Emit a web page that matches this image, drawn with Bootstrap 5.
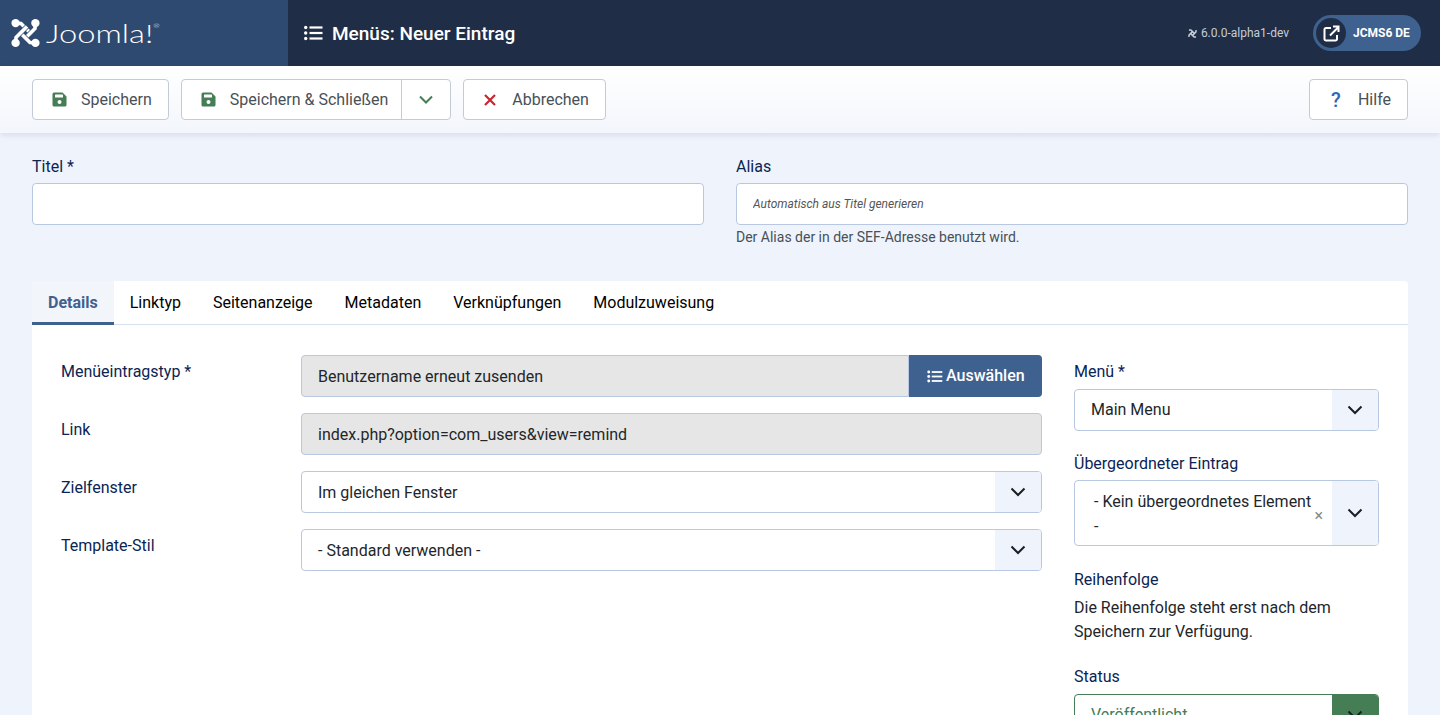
<!DOCTYPE html>
<html lang="de">
<head>
  <meta charset="UTF-8">
  <title>Menüs: Neuer Eintrag</title>
  <meta name="viewport" content="width=device-width, initial-scale=1">
  <link href="https://cdn.jsdelivr.net/npm/bootstrap@5.3.3/dist/css/bootstrap.min.css" rel="stylesheet">
  <style>
    html, body { height: 715px; overflow: hidden; }
    body { background: #eff4fc; font-family: Roboto, "Liberation Sans", sans-serif; font-size: 16px; color: #22262a; }

    .top-head { height: 66px; background: #1f2e46; color: #fff; }
    .brand-box { width: 288px; background: #2f4a70; padding-left: 11px; }
    .brand-word { display: inline-block; font-family: Lato, sans-serif; font-weight: 300; font-size: 26px; line-height: 1; margin-left: 6px; transform: scaleX(1.26); transform-origin: left center; }
    .brand-word sup { font-size: 6px; top: -15px; vertical-align: baseline; position: relative; }
    .page-title { font-size: 19px; font-weight: 500; margin: 0 0 0 9px; line-height: 1; }
    .version-txt { font-size: 12px; color: #c4ccd8; margin-right: 24px; gap: 3px; }
    .site-pill { width: 108px; height: 36px; background: #3e618f; border-radius: 18px; margin-right: 19px; padding: 0 3px; font-size: 12px; font-weight: 700; }
    .site-pill-ico { width: 30px; height: 30px; border-radius: 50%; background: #1f2e46; margin-right: 7px; }

    .tool-bar { height: 67px; background: linear-gradient(#fff, #f3f6fc); box-shadow: 0 2px 6px rgba(30, 50, 90, .12); padding: 13px 32px; gap: 12px; position: relative; }
    .tool-btn { height: 41px; background: #fff; border: 1px solid #c3cbd6; border-radius: 4px; color: #495057; padding: 0 16px 0 19px; gap: 14px; font-size: 16px; line-height: 1; }
    .tool-btn.split { padding: 0; gap: 0; }
    .tool-btn.cancel-btn { padding: 0 16px 0 20px; gap: 16px; }
    .tool-btn.help-btn { padding-left: 21px; gap: 0; }
    .help-mark { color: #2a69b8; font-size: 20px; font-weight: 500; width: 27px; }
    .split-main { padding: 0 13px 0 19px; gap: 14px; height: 100%; }
    .split-caret { width: 49px; height: 100%; border-left: 1px solid #c3cbd6; }

    .page-body { padding: 24px 32px 0; }
    .fld-label { color: #0b2454; line-height: 20px; margin-bottom: 6px; display: block; }
    .fld-input { height: 42px; border: 1px solid #b8c8e2; border-radius: 4px; background: #fff; color: #22262a; padding: 0 16px; }
    .fld-input.alias-input { padding-bottom: 3px; }
    .fld-input::placeholder { font-size: 12px; font-style: italic; color: #555; }
    .fld-input:disabled, .fld-input[readonly] { background: #e6e6e6; opacity: 1; }
    .fld-hint { font-size: 14px; color: #495057; margin-top: 2px; line-height: 21px; }
    .title-row { display: grid; grid-template-columns: 672px 672px; gap: 32px; height: 124px; }

    .tab-card { background: #fff; border-radius: 4px 4px 0 0; }
    .tab-strip { height: 44px; border-bottom: 1px solid #d8e1ef; }
    .tab-link { height: 44px; padding: 0 16px; line-height: 43px; color: #000; font-size: 16px; }
    .tab-link.on { background: #f2f6fb; color: #3f618f; font-weight: 700; border-bottom: 3px solid #3f618f; }

    .form-wrap { display: grid; grid-template-columns: 981px 305px; gap: 32px; padding: 30px 29px 0; }
    .form-row { display: grid; grid-template-columns: 240px 741px; min-height: 42px; margin-bottom: 16px; }
    .form-row > label { color: #0b2454; padding-top: 8px; line-height: 18px; }
    .pick-btn { width: 133px; height: 42px; background: #3e618f; color: #fff; font-weight: 500; border-radius: 0 4px 4px 0; gap: 3px; padding-left: 18px; flex: none; }
    .sel-box { height: 42px; border: 1px solid #b8c8e2; border-radius: 4px; background: #fff; overflow: hidden; color: #22262a; }
    .sel-txt { flex: 1; padding: 0 16px; }
    .form-row .sel-txt { padding-top: 2px; }
    .sel-caret { width: 46px; align-self: stretch; background: #eff4fc; flex: none; }
    .sel-box.tall { height: 66px; position: relative; }
    .sel-box.tall .sel-txt { padding: 8px 16px 0 19px; line-height: 25px; align-self: flex-start; }
    .clear-x { position: absolute; right: 55px; top: 25px; font-size: 16px; color: #888; line-height: 20px; }
    .sel-box.good { border-color: #457d54; color: #457d54; }
    .sel-box.good .sel-caret { background: #457d54; }
    .side-col { padding-top: 7px; }
    .side-group { margin-bottom: 23px; }
    .side-group p { margin: 0; line-height: 24px; }
  </style>
</head>
<body>

<svg width="0" height="0" class="position-absolute">
  <defs>
    <path id="jarm" d="M4.8 5.3 L10 5.5 L21 16.5"/>
    <g id="jarm-full">
      <use href="#jarm" fill="none" stroke="#2f4a70" stroke-width="5"/>
      <use href="#jarm" fill="none" stroke="#fff" stroke-width="3.6"/>
      <circle cx="4.6" cy="5.1" r="4.2" fill="#fff"/>
    </g>
  </defs>
</svg>

<header class="top-head d-flex align-items-stretch">
  <div class="brand-box d-flex align-items-center">
    <svg width="29" height="30" viewBox="0 0 29 30">
      <use href="#jarm-full"/>
      <use href="#jarm-full" transform="rotate(90 14.5 15)"/>
      <use href="#jarm-full" transform="rotate(180 14.5 15)"/>
      <use href="#jarm-full" transform="rotate(270 14.5 15)"/>
    </svg>
    <span class="brand-word">Joomla!<sup>®</sup></span>
  </div>
  <div class="d-flex align-items-center flex-grow-1">
    <svg class="ms-3" width="19" height="16" viewBox="0 0 19 16" fill="#fff">
      <circle cx="1.7" cy="2.5" r="1.7"/><circle cx="1.7" cy="8" r="1.7"/><circle cx="1.7" cy="13.5" r="1.7"/>
      <rect x="5.5" y="1.4" width="13" height="2.2"/><rect x="5.5" y="6.9" width="13" height="2.2"/><rect x="5.5" y="12.4" width="13" height="2.2"/>
    </svg>
    <h1 class="page-title">Menüs: Neuer Eintrag</h1>
  </div>
  <div class="d-flex align-items-center">
    <span class="version-txt d-flex align-items-center">
      <svg width="11" height="11" viewBox="0 0 29 30" fill="none" stroke="#c4ccd8" stroke-width="4">
        <path d="M4.8 5.3 L10 5.5 L21 16.5"/>
        <path d="M4.8 5.3 L10 5.5 L21 16.5" transform="rotate(90 14.5 15)"/>
        <path d="M4.8 5.3 L10 5.5 L21 16.5" transform="rotate(180 14.5 15)"/>
        <path d="M4.8 5.3 L10 5.5 L21 16.5" transform="rotate(270 14.5 15)"/>
      </svg>
      6.0.0-alpha1-dev
    </span>
    <div class="site-pill d-flex align-items-center">
      <span class="site-pill-ico d-flex align-items-center justify-content-center">
        <svg width="17" height="17" viewBox="0 0 17 17" fill="none" stroke="#fff" stroke-width="2">
          <path d="M8 3 H3 a1.5 1.5 0 0 0 -1.5 1.5 V14 a1.5 1.5 0 0 0 1.5 1.5 H12.5 a1.5 1.5 0 0 0 1.5 -1.5 V10"/>
          <path d="M7 10.5 L15 2.5 M10 1.5 H15.5 V7"/>
        </svg>
      </span>
      JCMS6 DE
    </div>
  </div>
</header>

<div class="tool-bar d-flex">
  <div class="tool-btn d-flex align-items-center">
    <svg width="15" height="15" viewBox="0 0 15 15"><path fill="#457d54" d="M2 .5 H10.5 L14.5 4.5 V13 a1.5 1.5 0 0 1 -1.5 1.5 H2 A1.5 1.5 0 0 1 .5 13 V2 A1.5 1.5 0 0 1 2 .5 Z"/><rect x="3" y="2.5" width="8" height="3" rx=".5" fill="#fff"/><circle cx="7.5" cy="10" r="2" fill="#fff"/></svg>
    Speichern
  </div>
  <div class="tool-btn split d-flex align-items-center">
    <div class="split-main d-flex align-items-center">
      <svg width="15" height="15" viewBox="0 0 15 15"><path fill="#457d54" d="M2 .5 H10.5 L14.5 4.5 V13 a1.5 1.5 0 0 1 -1.5 1.5 H2 A1.5 1.5 0 0 1 .5 13 V2 A1.5 1.5 0 0 1 2 .5 Z"/><rect x="3" y="2.5" width="8" height="3" rx=".5" fill="#fff"/><circle cx="7.5" cy="10" r="2" fill="#fff"/></svg>
      Speichern &amp; Schließen
    </div>
    <div class="split-caret d-flex align-items-center justify-content-center">
      <svg width="14" height="9" viewBox="0 0 14 9" fill="none" stroke="#457d54" stroke-width="2"><path d="M1 1.5 L7 7.5 L13 1.5"/></svg>
    </div>
  </div>
  <div class="tool-btn cancel-btn d-flex align-items-center">
    <svg width="12" height="12" viewBox="0 0 12 12" fill="none" stroke="#c8272d" stroke-width="2.2"><path d="M1 1 L11 11 M11 1 L1 11"/></svg>
    Abbrechen
  </div>
  <div class="tool-btn help-btn d-flex align-items-center ms-auto">
    <span class="help-mark">?</span>
    Hilfe
  </div>
</div>

<main class="page-body">
  <div class="title-row">
    <div>
      <label class="fld-label">Titel *</label>
      <input class="form-control fld-input" type="text">
    </div>
    <div>
      <label class="fld-label">Alias</label>
      <input class="form-control fld-input alias-input" type="text" placeholder="Automatisch aus Titel generieren">
      <div class="fld-hint">Der Alias der in der SEF-Adresse benutzt wird.</div>
    </div>
  </div>

  <section class="tab-card">
    <div class="tab-strip d-flex">
      <div class="tab-link on">Details</div>
      <div class="tab-link">Linktyp</div>
      <div class="tab-link">Seitenanzeige</div>
      <div class="tab-link">Metadaten</div>
      <div class="tab-link">Verknüpfungen</div>
      <div class="tab-link">Modulzuweisung</div>
    </div>
    <div class="form-wrap">
      <div>
        <div class="form-row">
          <label>Menüeintragstyp *</label>
          <div class="d-flex">
            <input class="form-control fld-input" style="border-radius:4px 0 0 4px" readonly value="Benutzername erneut zusenden">
            <div class="pick-btn d-flex align-items-center">
              <svg width="16" height="13" viewBox="0 0 19 16" fill="#fff">
                <circle cx="1.8" cy="2.5" r="1.8"/><circle cx="1.8" cy="8" r="1.8"/><circle cx="1.8" cy="13.5" r="1.8"/>
                <rect x="5.5" y="1.4" width="13" height="2.2"/><rect x="5.5" y="6.9" width="13" height="2.2"/><rect x="5.5" y="12.4" width="13" height="2.2"/>
              </svg>
              Auswählen
            </div>
          </div>
        </div>
        <div class="form-row">
          <label>Link</label>
          <input class="form-control fld-input" readonly value="index.php?option=com_users&amp;view=remind">
        </div>
        <div class="form-row">
          <label>Zielfenster</label>
          <div class="sel-box d-flex align-items-center">
            <div class="sel-txt">Im gleichen Fenster</div>
            <div class="sel-caret d-flex align-items-center justify-content-center"><svg width="16" height="10" viewBox="0 0 16 10" fill="none" stroke="#1b1e22" stroke-width="2"><path d="M1.5 1.5 L8 8 L14.5 1.5"/></svg></div>
          </div>
        </div>
        <div class="form-row">
          <label>Template-Stil</label>
          <div class="sel-box d-flex align-items-center">
            <div class="sel-txt">- Standard verwenden -</div>
            <div class="sel-caret d-flex align-items-center justify-content-center"><svg width="16" height="10" viewBox="0 0 16 10" fill="none" stroke="#1b1e22" stroke-width="2"><path d="M1.5 1.5 L8 8 L14.5 1.5"/></svg></div>
          </div>
        </div>
      </div>

      <div class="side-col">
        <div class="side-group">
          <label class="fld-label" style="margin-bottom:7px">Menü *</label>
          <div class="sel-box d-flex align-items-center">
            <div class="sel-txt">Main Menu</div>
            <div class="sel-caret d-flex align-items-center justify-content-center"><svg width="16" height="10" viewBox="0 0 16 10" fill="none" stroke="#1b1e22" stroke-width="2"><path d="M1.5 1.5 L8 8 L14.5 1.5"/></svg></div>
          </div>
        </div>
        <div class="side-group" style="margin-bottom:24px">
          <label class="fld-label">Übergeordneter Eintrag</label>
          <div class="sel-box tall d-flex align-items-center">
            <div class="sel-txt">- Kein übergeordnetes Element -</div>
            <span class="clear-x">×</span>
            <div class="sel-caret d-flex align-items-center justify-content-center"><svg width="16" height="10" viewBox="0 0 16 10" fill="none" stroke="#1b1e22" stroke-width="2"><path d="M1.5 1.5 L8 8 L14.5 1.5"/></svg></div>
          </div>
        </div>
        <div class="side-group">
          <label class="fld-label">Reihenfolge</label>
          <p>Die Reihenfolge steht erst nach dem Speichern zur Verfügung.</p>
        </div>
        <div class="side-group">
          <label class="fld-label" style="margin-bottom:7px">Status</label>
          <div class="sel-box good d-flex align-items-center">
            <div class="sel-txt">Veröffentlicht</div>
            <div class="sel-caret d-flex align-items-center justify-content-center"><svg width="16" height="10" viewBox="0 0 16 10" fill="none" stroke="#1b1e22" stroke-width="2"><path d="M1.5 1.5 L8 8 L14.5 1.5"/></svg></div>
          </div>
        </div>
      </div>
    </div>
  </section>
</main>

<script src="https://cdn.jsdelivr.net/npm/bootstrap@5.3.3/dist/js/bootstrap.bundle.min.js"></script>
</body>
</html>
